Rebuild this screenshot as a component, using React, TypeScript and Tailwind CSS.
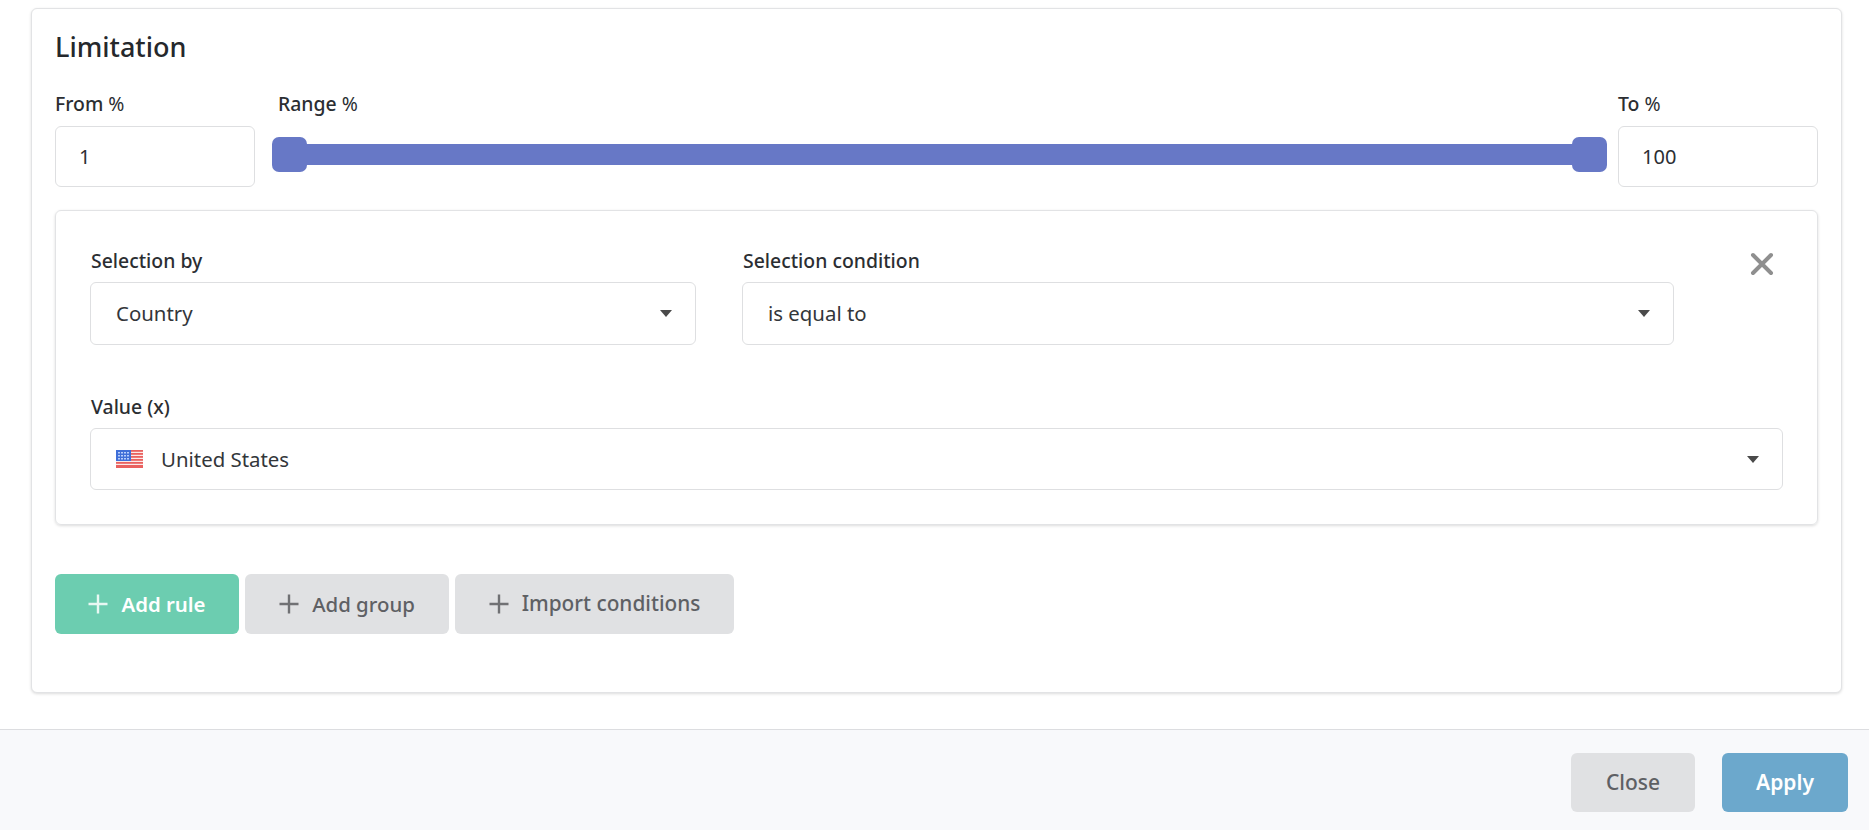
const font = { fontFamily: '"Noto Sans", "Open Sans", sans-serif' };

function Caret() {
  return (
    <svg width="12" height="7" viewBox="0 0 12 7" className="shrink-0">
      <path d="M0 0H12L6 7Z" fill="#4a4a4a" />
    </svg>
  );
}

function Plus({ color }: { color: string }) {
  return (
    <svg width="20" height="20" viewBox="0 0 20 20" className="shrink-0">
      <path d="M10 0.5V19.5M0.5 10H19.5" stroke={color} strokeWidth="2.4" />
    </svg>
  );
}

function Flag() {
  const stripes = [0, 3, 6, 9, 12, 15];
  return (
    <svg width="27" height="18" viewBox="0 0 27 18" className="shrink-0">
      <rect width="27" height="18" fill="#fbe9e8" />
      {stripes.map((y) => (
        <rect key={y} y={y} width="27" height="1.8" fill="#e9615f" />
      ))}
      <rect y="16" width="27" height="2" fill="#e9615f" />
      <rect width="15" height="11" fill="#3f6fd8" />
      {[2, 5, 8].map((y) =>
        [2, 5, 8, 11].map((x) => <rect key={`${x}-${y}`} x={x} y={y} width="2" height="1.5" fill="#b9cffb" />)
      )}
    </svg>
  );
}

function Select({ className, children }: { className?: string; children: React.ReactNode }) {
  return (
    <div className={`flex h-[63px] items-center justify-between rounded-[6px] border border-[#dedfe1] bg-white pl-[25px] pr-[23px] text-[20.4px] text-[#33363a] ${className ?? ""}`}>
      <div className="flex items-center">{children}</div>
      <Caret />
    </div>
  );
}

function Label({ children, className }: { children: React.ReactNode; className?: string }) {
  return <div className={`text-[19.4px] leading-[24px] font-medium text-[#2b2e32] ${className ?? ""}`}>{children}</div>;
}

function NumberBox({ value }: { value: string }) {
  return (
    <div className="mt-[10px] flex h-[61px] w-[200px] items-center rounded-[6px] border border-[#dedfe1] bg-white pl-[23px] text-[20px] text-[#2b2e32]">
      {value}
    </div>
  );
}

function ActionButton({ label, primary, className }: { label: string; primary?: boolean; className?: string }) {
  return (
    <button className={`flex h-[60px] items-center justify-center gap-[13px] rounded-[6px] text-[20.4px] ${primary ? "bg-[#6ccdb0] font-semibold text-white" : "bg-[#e0e1e3] font-medium text-[#5e6064]"} ${className ?? ""}`}>
      <Plus color={primary ? "#e8f8f3" : "#707174"} />
      {label}
    </button>
  );
}

export default function App() {
  return (
    <div style={font} className="flex h-[830px] w-[1869px] flex-col overflow-hidden bg-white">
      <div className="h-[729px] shrink-0 pl-[31px] pr-[27px] pt-[8px]">
        <div className="h-[685px] rounded-[6px] border border-[#e2e3e5] bg-white px-[23px] pt-[20px] shadow-[0_1px_3px_rgba(0,0,0,0.14)]">
          <h2 className="text-[27px] leading-[36px] font-medium text-[#25282c]">Limitation</h2>

          <div className="mt-[27px] flex">
            <div className="w-[200px] shrink-0">
              <Label>From <span className="font-normal">%</span></Label>
              <NumberBox value="1" />
            </div>
            <div className="ml-[17px] mr-[11px] flex-1">
              <Label className="ml-[6px]">Range <span className="font-normal">%</span></Label>
              <div className="relative mt-[28px] h-[21px] bg-[#6778c6]">
                <div className="absolute -top-[7px] left-0 h-[35px] w-[35px] rounded-[7px] bg-[#6778c6]" />
                <div className="absolute -top-[7px] right-0 h-[35px] w-[35px] rounded-[7px] bg-[#6778c6]" />
              </div>
            </div>
            <div className="w-[200px] shrink-0">
              <Label>To <span className="font-normal">%</span></Label>
              <NumberBox value="100" />
            </div>
          </div>

          <div className="mt-[23px] h-[315px] rounded-[6px] border border-[#e2e3e5] px-[34px] pt-[38px] shadow-[0_1px_3px_rgba(0,0,0,0.14)]">
            <div className="flex">
              <div className="w-[606px] shrink-0">
                <Label className="ml-[1px]">Selection by</Label>
                <Select className="mt-[9px]">Country</Select>
              </div>
              <div className="ml-[46px] w-[932px] shrink-0">
                <Label className="ml-[1px]">Selection condition</Label>
                <Select className="mt-[9px]">is equal to</Select>
              </div>
              <div className="ml-[76px] mt-[3px]">
                <svg width="24" height="24" viewBox="0 0 24 24">
                  <path d="M3 3L21 21M21 3L3 21" stroke="#8f8f8f" strokeWidth="4" strokeLinecap="round" />
                </svg>
              </div>
            </div>
            <Label className="mt-[50px] ml-[1px]">Value (x)</Label>
            <Select className="mt-[9px] !h-[62px]">
              <Flag />
              <span className="ml-[18px]">United States</span>
            </Select>
          </div>

          <div className="mt-[49px] flex gap-[6px]">
            <ActionButton primary label="Add rule" className="w-[184px]" />
            <ActionButton label="Add group" className="w-[204px]" />
            <ActionButton label="Import conditions" className="w-[279px] !text-[20.8px]" />
          </div>
        </div>
      </div>

      <div className="flex flex-1 items-start justify-end gap-[27px] border-t border-[#dcdde0] bg-[#f8f9fb] pr-[21px] pt-[23px]">
        <button className="h-[59px] w-[124px] rounded-[6px] bg-[#e0e1e3] text-[21px] font-medium text-[#5e6064]">Close</button>
        <button className="h-[59px] w-[126px] rounded-[6px] bg-[#6ca8cc] text-[21px] font-semibold text-white">Apply</button>
      </div>
    </div>
  );
}
